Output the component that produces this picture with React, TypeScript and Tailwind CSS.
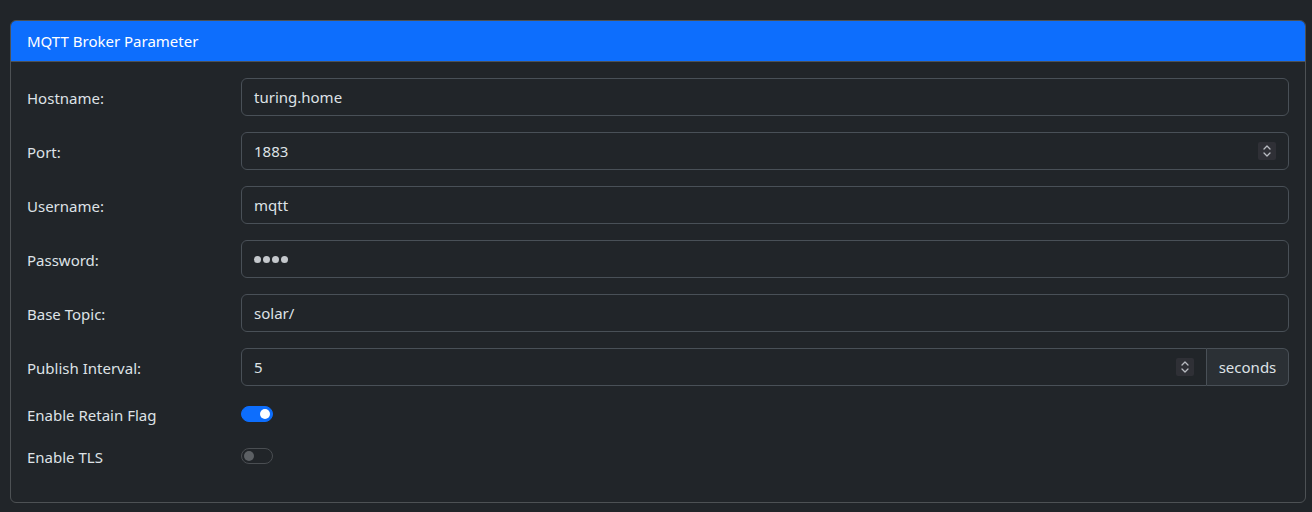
import React from "react";

const Spinner = () => (
  <span className="flex h-[18px] w-[18px] items-center justify-center rounded-[2px] bg-[#2f3036]">
    <svg width="10" height="14" viewBox="0 0 10 14" fill="none" stroke="#b9bcc2" strokeWidth="1.3" strokeLinecap="round" strokeLinejoin="round">
      <path d="M2 5 L5 2 L8 5" />
      <path d="M2 9 L5 12 L8 9" />
    </svg>
  </span>
);

const Row = ({ label, children }: { label: string; children: React.ReactNode }) => (
  <div className="mb-4 flex items-center">
    <label className="w-[214px] shrink-0 pt-[1px] text-[15px] leading-6 text-[#dee2e6]">{label}</label>
    <div className="flex-1">{children}</div>
  </div>
);

const Input = ({ value, spinner, className = "" }: { value: string; spinner?: boolean; className?: string }) => (
  <div className={`flex h-[38px] items-center border border-[#495057] bg-[#212529] pl-3 pr-3 text-[15px] text-[#dee2e6] ${className}`}>
    <span className="flex-1 pt-[1px]">{value}</span>
    {spinner && <Spinner />}
  </div>
);

const Switch = ({ on }: { on: boolean }) =>
  on ? (
    <span className="flex h-4 w-8 items-center justify-end rounded-full border border-[#0d6efd] bg-[#0d6efd] px-[2px]">
      <span className="h-[10px] w-[10px] rounded-full bg-white" />
    </span>
  ) : (
    <span className="flex h-4 w-8 items-center justify-start rounded-full border border-[#4a4e52] bg-[#212529] px-[2px]">
      <span className="h-[10px] w-[10px] rounded-full bg-[#5c6064]" />
    </span>
  );

const SwitchRow = ({ label, on }: { label: string; on: boolean }) => (
  <div className="mb-4 flex h-[26px] items-start">
    <label className="w-[214px] shrink-0 pt-[1px] text-[15px] leading-6 text-[#dee2e6]">{label}</label>
    <div className="pt-1">
      <Switch on={on} />
    </div>
  </div>
);

export default function App() {
  return (
    <div
      className="min-h-[512px] w-[1312px] bg-[#212529] pl-[10px] pt-[20px]"
      style={{ fontFamily: '"Noto Sans", "Open Sans", sans-serif' }}
    >
      <div className="w-[1296px] overflow-hidden rounded-[6px] border border-[#4d5154]">
        <div className="flex h-[41px] items-center border-b border-[#4d5154] bg-[#0d6efd] px-4 text-[15px] text-white">
          MQTT Broker Parameter
        </div>
        <div className="px-4 pb-4 pt-4">
          <Row label="Hostname:">
            <Input value="turing.home" className="rounded-[6px]" />
          </Row>
          <Row label="Port:">
            <Input value="1883" spinner className="rounded-[6px]" />
          </Row>
          <Row label="Username:">
            <Input value="mqtt" className="rounded-[6px]" />
          </Row>
          <Row label="Password:">
            <div className="flex h-[38px] items-center rounded-[6px] border border-[#495057] bg-[#212529] px-3 text-[#dee2e6]">
              <span className="flex gap-[2px] pt-[1px]">
                {[0, 1, 2, 3].map((i) => (
                  <span key={i} className="h-[7px] w-[7px] rounded-full bg-[#c4c8cc]" />
                ))}
              </span>
            </div>
          </Row>
          <Row label="Base Topic:">
            <Input value="solar/" className="rounded-[6px]" />
          </Row>
          <Row label="Publish Interval:">
            <div className="flex">
              <Input value="5" spinner className="flex-1 rounded-l-[6px]" />
              <span className="flex h-[38px] w-[82px] items-center justify-center rounded-r-[6px] border border-l-0 border-[#495057] bg-[#2b3035] pt-[1px] text-[15px] text-[#dee2e6]">
                seconds
              </span>
            </div>
          </Row>
          <SwitchRow label="Enable Retain Flag" on />
          <SwitchRow label="Enable TLS" on={false} />
        </div>
      </div>
    </div>
  );
}
